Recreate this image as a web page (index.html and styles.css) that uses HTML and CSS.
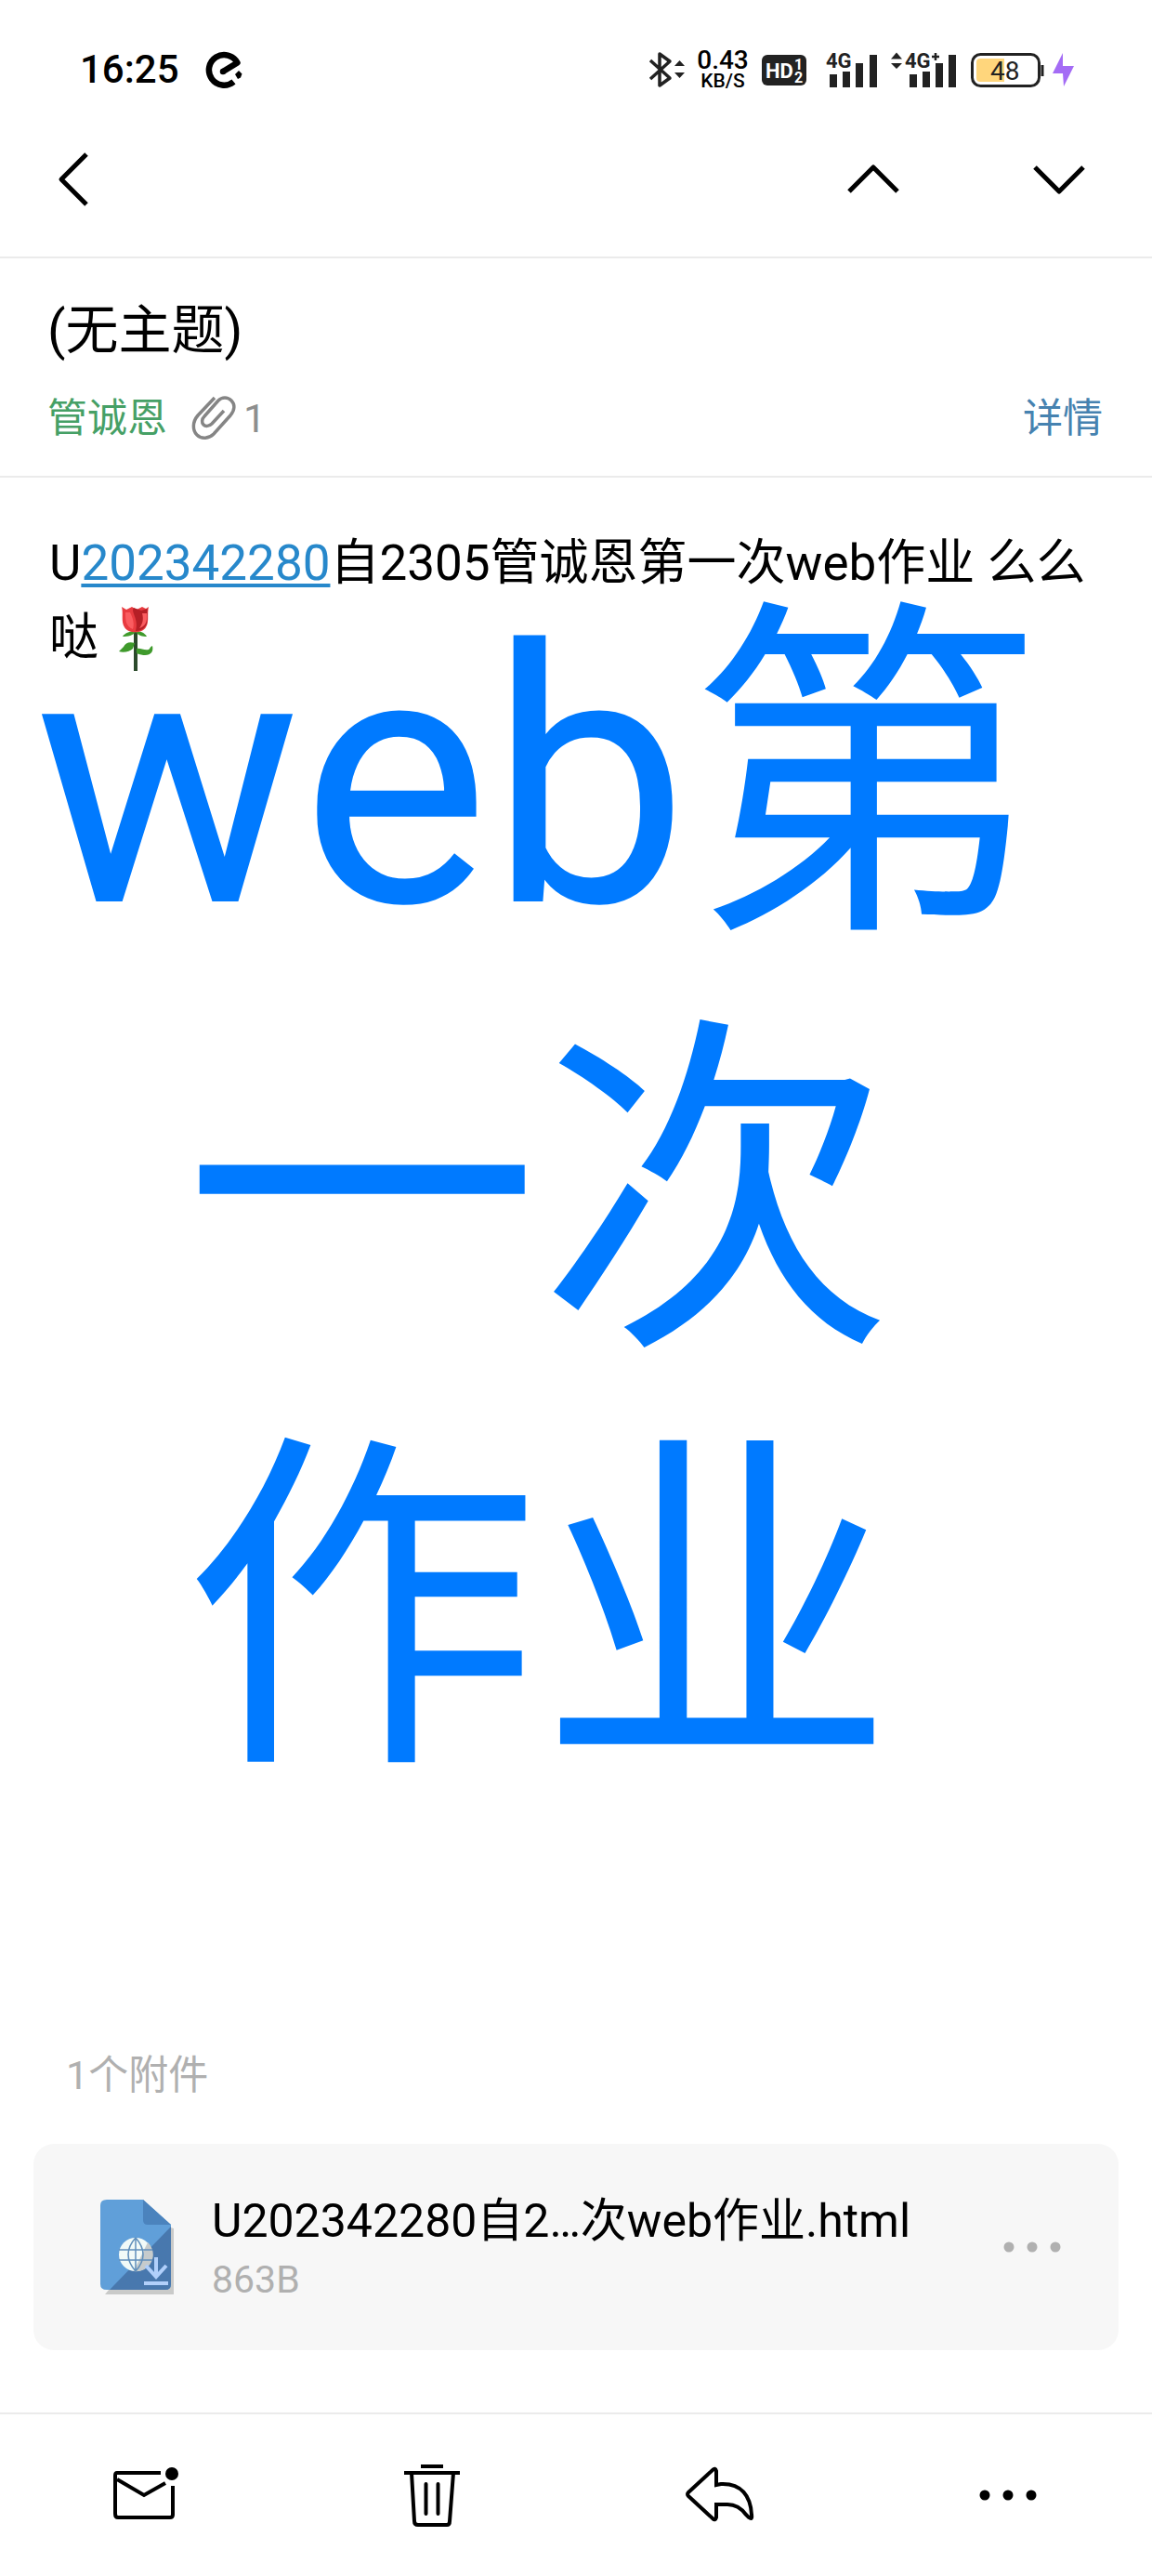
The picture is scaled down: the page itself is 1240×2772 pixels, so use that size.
FILE: index.html
```html
<!DOCTYPE html>
<html lang="zh-CN">
<head>
<meta charset="utf-8">
<meta name="viewport" content="width=device-width, initial-scale=1">
<title>(无主题)</title>
<link rel="stylesheet" href="styles.css">
</head>
<body>
<div class="app">
  <div class="status">
    <div class="status-left">
      <time class="clock">16:25</time>
      <svg class="icon" width="40" height="40" viewBox="0 0 40 40" aria-hidden="true">
        <path d="M19 22 34.500 12.500A16.300 16.300 0 1 0 30.500 33" fill="none" stroke="#000" stroke-width="6.500" stroke-linejoin="round"/>
        <circle cx="19" cy="22" r="3.250"/>
        <path d="M32 25l4-4 3.500 3.500-1.500 4-3 1.500z"/>
      </svg>
    </div>
    <div class="status-right">
      <svg class="icon bluetooth" width="40" height="40" viewBox="0 0 40 40" aria-hidden="true">
        <path d="M2 10 23 29 12 37V3L23 11 2 30" fill="none" stroke="#222" stroke-width="3.500" stroke-linejoin="round"/>
        <path d="M28 16l5.500-6 5.500 6zM28 23h11l-5.500 6z" fill="#222"/>
      </svg>
      <div class="speed"><span class="speed-value">0.43</span><span class="speed-unit">KB/S</span></div>
      <svg class="icon hd" width="48" height="33" viewBox="0 0 48 33" aria-hidden="true">
        <rect width="48" height="33" rx="6" fill="#222"/>
        <g fill="#fff" font-weight="700"><text x="4" y="25" font-size="22">HD</text><text x="35" y="16" font-size="16">1</text><text x="35" y="30" font-size="16">2</text></g>
      </svg>
      <svg class="icon sim1" width="56" height="38" viewBox="0 0 56 38" aria-hidden="true">
        <text x="0" y="17" font-size="22" font-weight="700" fill="#222">4G</text>
        <path d="M4 24h8v14h-8zM18 21h8v17h-8zM32 12h8v26h-8zM47 3h8v35h-8z" fill="#222"/>
      </svg>
      <svg class="icon sim2" width="72" height="38" viewBox="0 0 72 38" aria-hidden="true">
        <path d="M0 7.500l6-7 6 7zM0 12h12l-6 6zM20 24h8v14h-8zM34 21h8v17h-8zM48 12h8v26h-8zM62 3h8v35h-8z" fill="#222"/>
        <text x="15" y="17" font-size="22" font-weight="700" fill="#222">4G</text>
        <path d="M44 5h8M48 1v8" stroke="#222" stroke-width="2.500"/>
      </svg>
      <svg class="icon battery" width="80" height="38" viewBox="0 0 80 38" aria-hidden="true">
        <rect x="1.500" y="2.500" width="72" height="34" rx="9" fill="#fff" stroke="#222" stroke-width="3"/>
        <path d="M10 7h26v25H10q-4 0-4-4V11q0-4 4-4z" fill="#ffd67c"/>
        <path d="M77 14v12" stroke="#222" stroke-width="3"/>
        <text x="21" y="30" font-size="28" fill="#222">48</text>
      </svg>
      <svg class="icon" width="24" height="36" viewBox="0 0 24 36" aria-hidden="true"><path d="M11 0 0 22h11l1 14L23 14H11z" fill="#a46cf5"/></svg>
    </div>
  </div>

  <nav class="topbar" aria-label="邮件导航">
    <button class="icon-btn" type="button" aria-label="返回">
      <svg width="56" height="60" viewBox="0 0 56 60"><path d="M41 3 14 30 41 57"/></svg>
    </button>
    <div class="topbar-nav">
      <button class="icon-btn" type="button" aria-label="上一封"><svg width="60" height="60" viewBox="0 0 60 60"><path d="M4 43 30 17 56 43"/></svg></button>
      <button class="icon-btn" type="button" aria-label="下一封"><svg width="60" height="60" viewBox="0 0 60 60"><path d="M4 17 30 43 56 17"/></svg></button>
    </div>
  </nav>

  <header class="mail-head">
    <h1 class="subject">(无主题)</h1>
    <div class="meta">
      <a class="sender" href="#sender">管诚恩</a>
      <svg class="clip" width="48" height="50" viewBox="0 0 48 50" aria-hidden="true">
        <path d="M25 3 7 22C1 29 1 38 6 43s13 4 18-1L42 22c5-6 5-12 1-16s-10-4-14 0L14 23c-3 3-3 7-1 9s6 2 9-1L35 17" fill="none" stroke="#858585" stroke-width="3.500"/>
      </svg>
      <span class="count">1</span>
      <a class="details" href="#details">详情</a>
    </div>
  </header>

  <main class="mail-body">
    <p class="text">U<a href="#202342280">202342280</a>自2305管诚恩第一次web作业 么么哒 <svg class="rose" width="38" height="70" viewBox="0 0 38 70" role="img" aria-label="玫瑰">
      <path d="M18 28v42" stroke="#2c4a2c" stroke-width="4"/>
      <path d="M18 27c-5 0-12 2-14 6 6 0 11-1 14-5 3 4 7 5 12 5-2-4-7-6-12-6zM17 40c-6-2-10 0-12 4l-5 5c5 2 12 0 15-3zM19 46c4-1 8 2 13 1 2-1 1-3 4-4 2 8-4 13-17 8z" fill="#3f9a2c"/>
      <path d="M3 1l5 3 6-3 5 3 6-3 4 2 3-2c-2 8 1 16-3 22-4 7-19 7-23 0C2 17 5 8 3 1z" fill="#e83b40"/>
      <path d="M16 2c-4 4 6 12 2 25 6 0 10-3 12-8 1-6 0-12 1-16l-7 2z" fill="#b51f26"/>
      <path d="M7 7c0 8 0 15 8 18 2-6 0-12-3-18zM25 8c2 7 0 12-3 16 6-2 9-6 8-16z" fill="#fa5c60"/>
    </svg></p>
    <h2 class="banner">web第<br>一次<br>作业</h2>
  </main>

  <section class="attachments" aria-labelledby="att-title">
    <h2 class="att-title" id="att-title">1个附件</h2>
    <div class="card">
      <svg class="file" width="80" height="102" viewBox="0 0 80 102" aria-hidden="true">
        <path d="M76 30 79 31v71H5l5-6z" fill="#c9cac9"/>
        <path d="M7 0h39l30 27v64q0 6-6 6H7q-7 0-7-6V6q0-6 7-6z" fill="#609fd9"/>
        <path d="M76 29v62q0 6-6 6H10z" fill="#4878ae"/>
        <path d="M46 0l30 27H51q-5 0-5-5z" fill="#4b83bd"/>
        <circle cx="38" cy="59" r="18" fill="#f1faf8"/>
        <path d="M51 46a18 18 0 0 1-15 31z" fill="#c6cbcc"/>
        <path d="M38 41v36M20 54h36M20 65h36M38 41q-16 18 0 36M38 41q16 18 0 36" fill="none" stroke="#608fbb" stroke-width="1.500"/>
        <path d="M60 62v20M49 71l11 12 11-12M47 90h26" fill="none" stroke="#b1d0fb" stroke-width="4"/>
      </svg>
      <div class="file-info">
        <a class="file-name" href="#file">U202342280自2…次web作业.html</a>
        <span class="file-size">863B</span>
      </div>
      <button class="icon-btn" type="button" aria-label="附件选项"><svg class="dots-grey" width="62" height="12" viewBox="0 0 62 12"><circle cx="6" cy="6" r="5.500"/><circle cx="31" cy="6" r="5.500"/><circle cx="56" cy="6" r="5.500"/></svg></button>
    </div>
  </section>

  <footer class="toolbar">
    <button class="icon-btn" type="button" aria-label="标为未读"><svg width="66" height="70" viewBox="0 0 66 70"><path d="M51 11H4Q2 11 2 14V55Q2 59 5 59H61Q64 59 64 56V25M4 18 33 35 56 22"/><circle class="solid" cx="63" cy="12" r="7"/></svg></button>
    <button class="icon-btn" type="button" aria-label="删除"><svg width="60" height="70" viewBox="0 0 60 70"><path d="M0 11H60M18 4H42M8 11 11 63Q11 67 15 67H46Q49 67 49 63L53 11"/><path class="round" d="M23.500 23V55M36.500 23V55"/></svg></button>
    <button class="icon-btn" type="button" aria-label="回复"><svg width="74" height="70" viewBox="0 0 74 70"><path d="M33 24V9Q32 5 29 8L3 32Q1 34 3 36L29 60Q32 63 33 59V45H45Q57 45 65 56L68 59Q72 62 71 56C70 36 60 22 38 23Z"/></svg></button>
    <button class="icon-btn" type="button" aria-label="更多"><svg width="62" height="70" viewBox="0 0 62 70"><circle class="solid" cx="6" cy="35" r="5.500"/><circle class="solid" cx="31" cy="35" r="5.500"/><circle class="solid" cx="56" cy="35" r="5.500"/></svg></button>
  </footer>
</div>
</body>
</html>
```
FILE: styles.css
```css
* { box-sizing: border-box; }

body {
  margin: 0;
  background: #fff;
  color: #000;
  font-family: Roboto, "Noto Sans CJK SC", sans-serif;
}

h1, h2, p { margin: 0; font-weight: 400; }
a { color: inherit; text-decoration: none; }
svg { display: block; }
svg text { font-family: Roboto, sans-serif; }

.app {
  display: flex;
  flex-direction: column;
  min-height: 100vh;
}

/* Phone status bar */
.status {
  display: flex;
  justify-content: space-between;
  align-items: center;
  height: 120px;
  padding: 30px 83px 0 86px;
}
.status-left, .status-right { display: flex; align-items: center; }
.status-left { gap: 28px; }
.clock { font-size: 42px; line-height: 48px; font-weight: 500; }
.icon { flex: none; overflow: visible; }
.speed {
  display: flex;
  flex-direction: column;
  align-items: center;
  width: 56px;
  margin: 0 14px 0 12px;
  font-weight: 500;
}
.speed-value { font-size: 28px; line-height: 24px; }
.speed-unit { font-size: 21px; line-height: 20px; }
.sim1 { margin-left: 21px; }
.sim2 { margin-left: 14px; }
.battery { margin: 0 8px 0 14px; }

/* Controls drawn as line icons */
.icon-btn {
  display: flex;
  align-items: center;
  justify-content: center;
  padding: 0;
  border: 0;
  background: none;
  cursor: pointer;
}
.icon-btn path {
  fill: none;
  stroke: #000;
  stroke-width: 4;
}
.icon-btn .round { stroke-linecap: round; }
.icon-btn .solid { fill: #000; }
.icon-btn svg { overflow: visible; }

.topbar {
  display: flex;
  justify-content: space-between;
  align-items: center;
  height: 158px;
  padding: 0 70px 10px 52px;
  border-bottom: 2px solid #ebebeb;
}
.topbar .icon-btn path { stroke-width: 5; stroke-linejoin: round; }
.topbar-nav { display: flex; gap: 140px; }

/* Subject and sender */
.mail-head {
  padding: 40px 53px 30px 51px;
  border-bottom: 2px solid #ebebeb;
}
.subject { font-size: 57px; line-height: 76px; }
.meta {
  display: flex;
  align-items: center;
  margin-top: 24px;
  font-size: 43px;
  line-height: 64px;
}
.sender { color: #46a066; }
.clip { margin: 0 8px 0 26px; }
.count { color: #8e8e8e; }
.details { margin-left: auto; color: #4682b0; }

/* Message */
.mail-body { padding-top: 52px; }
.text {
  padding: 0 53px;
  font-size: 53px;
  line-height: 80px;
}
.text a {
  color: #2788cb;
  text-decoration: underline;
  text-decoration-thickness: 4px;
  text-underline-offset: 4px;
}
.rose {
  display: inline-block;
  margin: -6px 0 0 9px;
  vertical-align: middle;
}
.banner {
  margin-top: -110px;
  padding-right: 80px;
  font-size: 382px;
  line-height: 448px;
  text-align: center;
  color: #007aff;
}

/* Attachments */
.attachments {
  margin-top: auto;
  padding: 0 36px 67px;
}
.att-title {
  padding: 0 35px;
  font-size: 43px;
  line-height: 64px;
  color: #b0b0b0;
}
.card {
  display: flex;
  align-items: center;
  margin-top: 42px;
  padding: 48px 62px 48px 72px;
  border-radius: 22px;
  background: #f7f7f7;
}
.file { flex: none; }
.file-info {
  flex: 1;
  display: flex;
  flex-direction: column;
  min-width: 0;
  padding: 0 40px;
}
.file-name { font-size: 50px; line-height: 70px; }
.file-size { font-size: 41px; line-height: 56px; color: #b0b0b0; }
.dots-grey { fill: #b0b0b0; }

/* Bottom actions */
.toolbar {
  display: grid;
  grid-template-columns: repeat(4, 1fr);
  height: 176px;
  border-top: 2px solid #ebebeb;
}
```
